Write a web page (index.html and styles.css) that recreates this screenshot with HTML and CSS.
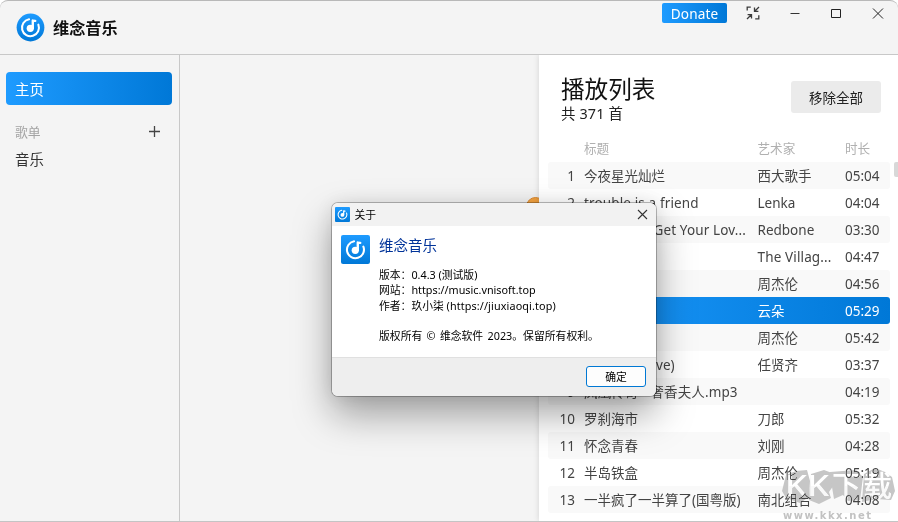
FILE: index.html
```html
<!DOCTYPE html>
<html lang="zh-CN">

<head>
    <meta charset="UTF-8">
    <meta name="viewport" content="width=device-width, initial-scale=1.0">
    <title>维念音乐</title>
    <link rel="stylesheet" href="styles.css">
</head>

<body>
    <svg width="0" height="0" class="defs">
        <defs>
            <linearGradient id="blue" x1="0" y1="0" x2="0" y2="1">
                <stop offset="0" stop-color="#1e9bff" />
                <stop offset="1" stop-color="#0078d7" />
            </linearGradient>
            <symbol id="disc" viewBox="0 0 28 28">
                <path d="M12.6 6.1A8.2 8.2 0 1 0 21.6 11.2" fill="none" stroke="#fff" stroke-width="2" stroke-linecap="round" />
                <circle cx="13.8" cy="14.8" r="3.5" fill="#fff" />
                <path d="M16.2 14.5V7.3l2.4.3" fill="none" stroke="#fff" stroke-width="2.3" stroke-linecap="round" stroke-linejoin="round" />
            </symbol>
        </defs>
    </svg>

    <div class="window">
        <div class="header">
            <svg class="logo" viewBox="0 0 28 28">
                <circle cx="14" cy="14" r="13.4" fill="url(#blue)" />
                <use href="#disc" />
            </svg>
            <div class="app-name">维念音乐</div>
            <div class="controls">
                <div class="donate">Donate</div>
                <svg class="ctl" viewBox="0 0 14 14" fill="none" stroke="#3a3a3a" stroke-width="1.3">
                    <path d="M1.2 4.5V1.2H4.8M12.8 9.3v3.5H9.2M13 1L8.7 5.2M8.5 1.6v3.8h3.9M1 13l4.3-4.2M1.6 8.6h3.9v3.8" />
                </svg>
                <svg class="ctl" viewBox="0 0 14 14" stroke="#333"><path d="M2.5 7.5h9" /></svg>
                <svg class="ctl" viewBox="0 0 14 14" fill="none" stroke="#222"><path d="M2.5 3.5h9v8h-9z" /></svg>
                <svg class="ctl" viewBox="0 0 14 14" stroke="#222"><path d="M2 2.5l10 10M12 2.5l-10 10" /></svg>
            </div>
        </div>

        <div class="main">
            <div class="sidebar">
                <div class="menu-active">主页</div>
                <div class="menu-title">
                    <span>歌单</span>
                    <svg width="13" height="13" stroke="#444" stroke-width="1.3"><path d="M1 6.5h11M6.5 1v11" /></svg>
                </div>
                <div class="menu-item">音乐</div>
            </div>

            <div class="content">
                <div class="cover"></div>
            </div>

            <div class="playlist">
                <div class="list-head">
                    <div>
                        <div class="list-title">播放列表</div>
                        <div class="list-count">共 371 首</div>
                    </div>
                    <div class="remove">移除全部</div>
                </div>
                <div class="row labels"><span></span><span>标题</span><span>艺术家</span><span>时长</span></div>
                <div class="rows">
                    <div class="row"><span>1</span><span>今夜星光灿烂</span><span>西大歌手</span><span>05:04</span></div>
                    <div class="row"><span>2</span><span class="latin">trouble is a friend</span><span>Lenka</span><span>04:04</span></div>
                    <div class="row"><span>3</span><span class="latin">Come and Get Your Lov...</span><span>Redbone</span><span>03:30</span></div>
                    <div class="row"><span>4</span><span>YMCA</span><span class="latin">The Villag...</span><span>04:47</span></div>
                    <div class="row"><span>5</span><span>一路向北</span><span>周杰伦</span><span>04:56</span></div>
                    <div class="row playing"><span>6</span><span>我的楼兰</span><span>云朵</span><span>05:29</span></div>
                    <div class="row"><span>7</span><span>夜的第七章</span><span>周杰伦</span><span>05:42</span></div>
                    <div class="row"><span>8</span><span>死不回头 (Live)</span><span>任贤齐</span><span>03:37</span></div>
                    <div class="row"><span>9</span><span class="latin">凤凰传奇 - 奢香夫人.mp3</span><span></span><span>04:19</span></div>
                    <div class="row"><span>10</span><span>罗刹海市</span><span>刀郎</span><span>05:32</span></div>
                    <div class="row"><span>11</span><span>怀念青春</span><span>刘刚</span><span>04:28</span></div>
                    <div class="row"><span>12</span><span>半岛铁盒</span><span>周杰伦</span><span>05:19</span></div>
                    <div class="row"><span>13</span><span>一半疯了一半算了(国粤版)</span><span>南北组合</span><span>04:08</span></div>
                </div>
                <div class="scrollbar"></div>
            </div>
        </div>
    </div>

    <div class="dialog">
        <div class="dialog-bar">
            <svg width="15" height="15" viewBox="0 0 28 28">
                <rect width="28" height="28" rx="2" fill="url(#blue)" />
                <use href="#disc" />
            </svg>
            <span class="bar-text">关于</span>
            <svg class="dialog-close" width="11" height="11" stroke="#333" stroke-width="1.1"><path d="M1 1l9 9M10 1l-9 9" /></svg>
        </div>
        <div class="dialog-body">
            <svg class="dialog-logo" viewBox="0 0 28 28">
                <rect width="28" height="28" rx="2" fill="url(#blue)" />
                <use href="#disc" />
            </svg>
            <div>
                <div class="dialog-title">维念音乐</div>
                <p>版本：0.4.3 (测试版)</p>
                <p>网站：https://music.vnisoft.top</p>
                <p>作者：玖小柒 <span class="author-url">(https://jiuxiaoqi.top)</span></p>
                <p class="copyright">版权所有 © 维念软件 2023。保留所有权利。</p>
            </div>
        </div>
        <div class="dialog-foot">
            <div class="ok">确定</div>
        </div>
    </div>

    <svg class="watermark" viewBox="0 0 118 56">
        <g fill="#c6c6c6">
            <path d="M4 8L14 4 25 3 28 14 27 30 18 36 4 31 0 24Z" />
            <path d="M29 7L42 3 50 6 54 15 47 25 49 31 37 37 27 33Z" />
            <path d="M48 5L74 3 81 10 78 33 66 34 61 28 52 32 50 20Z" />
            <path d="M82 7L93 1 103 5 110 10 113 24 109 33 94 32 80 35Z" />
        </g>
        <g fill="#fff" font-weight="500">
            <text x="3" y="29" font-size="29" textLength="44" lengthAdjust="spacingAndGlyphs">KK</text>
            <text x="50" y="30" font-size="29" textLength="60">下载</text>
        </g>
        <text class="site" x="1" y="52" textLength="88">www.kkx.net</text>
    </svg>
</body>

</html>
```

FILE: styles.css
```css
* {
    box-sizing: border-box;
}

body {
    margin: 0;
    width: 898px;
    height: 522px;
    overflow: hidden;
    background: #fff;
    position: relative;
    font-family: "Noto Sans", "Noto Sans CJK SC", sans-serif;
    font-size: 13.5px;
    color: #222;
}

.defs {
    position: absolute;
}

.window {
    height: 522px;
    display: flex;
    flex-direction: column;
    background: #f4f4f4;
    border-top: 1px solid #b8b8b8;
    border-bottom: 1px solid #c4c4c4;
    border-radius: 8px 8px 0 0;
    overflow: hidden;
}

.header {
    height: 54px;
    flex: none;
    display: flex;
    border-bottom: 1px solid #c8c8c8;
    padding-left: 16px;
}

.logo {
    width: 29px;
    height: 29px;
    margin-top: 12px;
}

.app-name {
    margin: 15px 0 0 8px;
    font-size: 16.2px;
    line-height: 24px;
    font-weight: 700;
    color: #111;
}

.controls {
    display: flex;
    margin-left: auto;
    padding: 2px 13.5px 0 0;
}

.donate {
    width: 65px;
    height: 20px;
    margin-right: 19px;
    border-radius: 2px;
    background: linear-gradient(90deg, #1e9bff, #0078d7);
    color: #fff;
    text-align: center;
    line-height: 22px;
    font-size: 13.6px;
    letter-spacing: .12px;
}

.ctl {
    width: 14px;
    height: 14px;
    margin-top: 3px;
}

.ctl + .ctl {
    margin-left: 27.5px;
}

.main {
    flex: 1;
    min-height: 0;
    display: flex;
}

.sidebar {
    width: 180px;
    border-right: 1px solid #c8c8c8;
    padding: 17px 7px 0 6px;
    font-size: 14.4px;
}

.menu-active {
    height: 33px;
    padding-left: 9px;
    line-height: 36px;
    border-radius: 4px;
    background: linear-gradient(90deg, #1e9bff, #0078d7);
    color: #fff;
}

.menu-title {
    display: flex;
    align-items: center;
    justify-content: space-between;
    height: 20px;
    margin-top: 16px;
    padding: 0 11px 0 9px;
    font-size: 12.8px;
    color: #a4a4a4;
}

.menu-item {
    padding-left: 9px;
    margin-top: 8px;
    line-height: 22px;
    color: #333;
}

.content {
    flex: 1;
    position: relative;
}

/* edge of the cover art, mostly behind the dialog */
.cover {
    position: absolute;
    right: -6px;
    top: 142px;
    width: 19px;
    height: 19px;
    border-radius: 50%;
    background: #f7a541;
    border: 1px solid #dd8b32;
}

.playlist {
    width: 359px;
    position: relative;
    background: #fff;
    box-shadow: 0 0 6px rgba(0, 0, 0, .14);
    padding: 20px 8px 0 9px;
    clip-path: inset(0 0 0 -8px);
}

.list-head {
    display: flex;
    justify-content: space-between;
    padding: 0 9px 0 13px;
    height: 62px;
}

.list-title {
    font-size: 23.6px;
    line-height: 28px;
    color: #111;
}

.list-count {
    font-size: 14.4px;
    line-height: 22px;
    letter-spacing: .15px;
    color: #222;
}

.remove {
    width: 90px;
    height: 32px;
    margin-top: 6px;
    border-radius: 3px;
    background: #ebebeb;
    line-height: 34px;
    text-align: center;
}

.row {
    display: grid;
    grid-template-columns: 27px 165px 76px 36px;
    column-gap: 9px;
    height: 27px;
    line-height: 29px;
    border-radius: 3px;
    white-space: nowrap;
    color: #444;
}

.row span:first-child {
    text-align: right;
}

.row span:nth-child(3) {
    margin-left: -0.5px;
}

.row span:last-child {
    margin-left: 2px;
}

.row .latin {
    letter-spacing: .14px;
}

.row:nth-child(odd) {
    background: #f9f9f9;
}

.row.labels {
    height: 25px;
    line-height: 24px;
    background: none;
    font-size: 12.6px;
    color: #b0b0b0;
}

.row.playing {
    background: linear-gradient(90deg, #1e9bff, #0078d7);
    color: #fff;
}

.scrollbar {
    position: absolute;
    right: 0;
    top: 107px;
    width: 4px;
    height: 15px;
    border-radius: 2px 0 0 2px;
    background: #d8d8d8;
}

.dialog {
    position: absolute;
    left: 332px;
    top: 203px;
    width: 324px;
    height: 193px;
    display: flex;
    flex-direction: column;
    border-radius: 6px;
    overflow: hidden;
    background: #fff;
    box-shadow: 0 0 0 1px rgba(0, 0, 0, .26), 0 18px 38px rgba(0, 0, 0, .36), 0 0 18px rgba(0, 0, 0, .08);
    font-size: 10.8px;
    color: #000;
}

.dialog-bar {
    height: 23px;
    display: flex;
    align-items: center;
    gap: 5px;
    padding: 0 8px 0 2.5px;
    background: #f2f2f2;
}

.bar-text {
    padding-bottom: 2px;
}

.dialog-close {
    margin-left: auto;
}

.dialog-body {
    flex: 1;
    display: flex;
    gap: 9px;
    padding: 9px 9px 0;
}

.dialog-logo {
    width: 29px;
    height: 29px;
}

.dialog-title {
    margin: -2px 0 10px;
    font-size: 14.5px;
    line-height: 24px;
    color: #003399;
}

.dialog p {
    margin: 0;
    line-height: 15.3px;
    white-space: nowrap;
}

.author-url {
    letter-spacing: .12px;
}

.dialog .copyright {
    margin-top: 15px;
    letter-spacing: .02px;
    word-spacing: 1.5px;
}

.dialog-foot {
    height: 39px;
    display: flex;
    justify-content: flex-end;
    padding: 8px 10px 0;
    background: #eee;
    border-top: 1px solid #e0e0e0;
}

.ok {
    width: 60px;
    height: 21px;
    border: 1px solid #0078d4;
    border-radius: 3px;
    background: #fdfdfd;
    text-align: center;
    line-height: 19px;
}

.watermark {
    position: absolute;
    left: 782px;
    top: 467px;
    width: 118px;
    height: 56px;
    mix-blend-mode: darken;
}

.watermark .site {
    font-family: "DejaVu Sans", sans-serif;
    font-size: 10px;
    font-weight: 700;
    fill: #c2c2c2;
}
```
